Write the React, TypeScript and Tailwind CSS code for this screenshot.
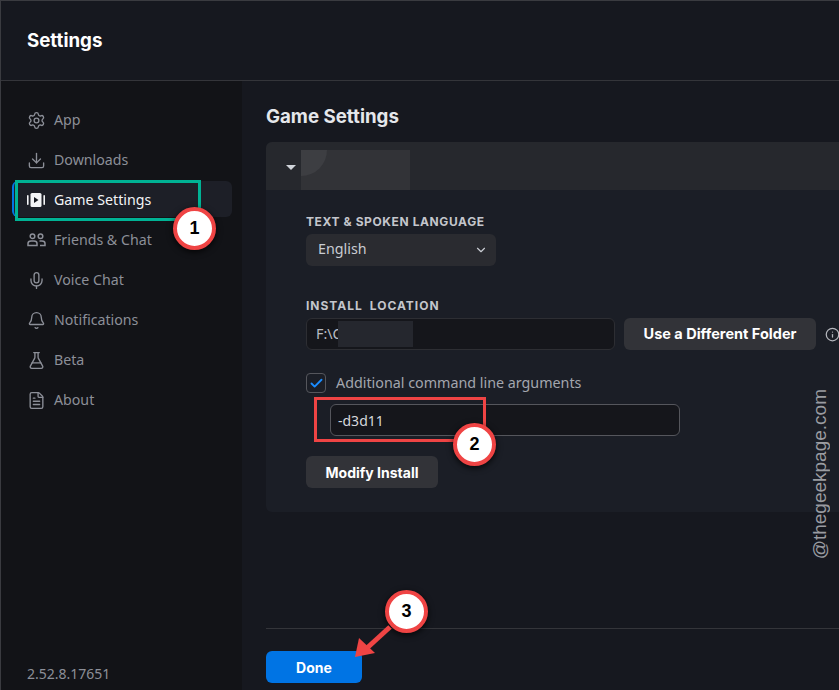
import { Settings, Download, Mic, Bell, FlaskConical, FileText, Check, ChevronDown, Info } from "lucide-react";

function GameIcon() {
  return (
    <svg width="18" height="16" viewBox="0 0 18 16" fill="none">
      <rect x="0" y="3" width="1.6" height="10" rx="0.8" fill="#f3f4f6" />
      <rect x="16.4" y="3" width="1.6" height="10" rx="0.8" fill="#f3f4f6" />
      <rect x="3.5" y="1" width="11" height="14" rx="1.5" fill="#f3f4f6" />
      <path d="M7 5l4.5 3L7 11z" fill="#16181f" />
    </svg>
  );
}

function FriendsIcon() {
  return (
    <svg width="19" height="14" viewBox="0 0 19 14" fill="none" stroke="currentColor" strokeWidth="1.5">
      <circle cx="5.5" cy="3.2" r="2.3" />
      <circle cx="13.5" cy="3.2" r="2.3" />
      <path d="M1 12.5v-2c0-1.4 1.3-2.5 3-2.5h3c1.7 0 3 1.100 3 2.500v2z" />
      <path d="M12.500 8h2.500c1.700 0 3 1.100 3 2.500v2h-5" />
    </svg>
  );
}

const NAV = [
  { label: "App", icon: <Settings size={19} strokeWidth={1.7} /> },
  { label: "Downloads", icon: <Download size={19} strokeWidth={1.7} /> },
  { label: "Game Settings", icon: <GameIcon />, active: true },
  { label: "Friends & Chat", icon: <FriendsIcon /> },
  { label: "Voice Chat", icon: <Mic size={19} strokeWidth={1.7} /> },
  { label: "Notifications", icon: <Bell size={19} strokeWidth={1.7} /> },
  { label: "Beta", icon: <FlaskConical size={19} strokeWidth={1.7} /> },
  { label: "About", icon: <FileText size={19} strokeWidth={1.7} /> },
];

function Badge({ n, className }: { n: number; className: string }) {
  return (
    <div
      className={`absolute w-[43px] h-[43px] rounded-full bg-white border-[4px] border-[#ef4444] flex items-center justify-center text-[18px] font-bold text-black shadow-[0_2px_6px_rgba(0,0,0,0.8)] font-['Liberation_Sans',sans-serif] ${className}`}
    >
      {n}
    </div>
  );
}

export default function App() {
  return (
    <div className="relative w-[839px] h-[690px] overflow-hidden flex flex-col bg-[#16181f] border-l border-t border-[#3a3b40] font-['Noto_Sans',sans-serif]">
      {/* Header */}
      <div className="h-[80px] shrink-0 border-b border-[#34353a] pl-[26px] pt-[25px]">
        <h1 className="text-[18.7px] leading-[30px] font-bold text-white font-['Inter',sans-serif]">Settings</h1>
      </div>

      <div className="flex-1 flex min-h-0">
        {/* Sidebar */}
        <div className="w-[241px] shrink-0 bg-[#121317] flex flex-col justify-between pb-[6px] pt-[20px]">
          <div className="flex flex-col gap-1">
            {NAV.map((item) => (
              <div
                key={item.label}
                className={`h-9 ml-[11px] w-[220px] flex items-center gap-[8px] pt-[2px] rounded-md text-[14.2px] ${
                  item.active ? "bg-[#1d1f27] text-[#f3f4f6] border-l-2 border-[#0074e4] pl-[12px]" : "text-[#8c8f98] pl-[14px]"
                }`}
              >
                <span className="w-[20px] flex justify-center shrink-0">{item.icon}</span>
                <span>{item.label}</span>
              </div>
            ))}
          </div>
          <div className="pl-[26px] text-[14px] leading-[20px] text-[#8c8f98]">2.52.8.17651</div>
        </div>

        {/* Main */}
        <div className="flex-1 min-w-0 pl-6 flex flex-col">
          <h2 className="mt-[23px] text-[18.7px] leading-[26px] font-bold text-[#e5e7eb] font-['Inter',sans-serif]">Game Settings</h2>

          <div className="mt-[12px] w-[620px] h-[370px] shrink-0 bg-[#1b1e26] rounded-md overflow-hidden">
            <div className="h-[48px] bg-[#26282d] flex items-end">
              <div className="h-full flex items-center pl-[20px] w-[35px]">
                <span className="mt-[2px] w-0 h-0 border-l-[5px] border-r-[5px] border-t-[5px] border-l-transparent border-r-transparent border-t-[#d1d5db]" />
              </div>
              <div className="w-[109px] h-[40px] bg-[#323337]">
                <div className="w-[26px] h-[26px] rounded-br-full bg-[#3d3e42]" />
              </div>
            </div>

            <div className="pl-[40px] pt-[24px]">
              <div className="text-[12px] leading-[16px] font-bold tracking-[0.6px] text-[#c4c6cc] font-['Inter',sans-serif]">TEXT &amp; SPOKEN LANGUAGE</div>
              <div className="mt-[4px] w-[190px] h-[32px] bg-[#2a2b30] rounded-md flex items-center justify-between pl-[12px] pr-[8px] pb-[3px] text-[14.3px] text-[#c9ccd3]">
                <span>English</span>
                <ChevronDown size={14} className="text-[#c9ccd3] mt-[3px]" />
              </div>

              <div className="mt-[32px] text-[12px] leading-[16px] font-bold tracking-[1px] [word-spacing:3px] text-[#c4c6cc] font-['Inter',sans-serif]">INSTALL LOCATION</div>
              <div className="mt-[4px] flex items-center">
                <div className="w-[309px] h-[32px] bg-[#15161b] border border-[#2d2e33] rounded-md flex items-center pl-[9px] text-[14.3px] text-[#b9bcc4]">
                  <span>F:\C</span>
                  <span className="-ml-[4px] w-[75px] h-[26px] bg-[#25272e]" />
                </div>
                <div className="ml-[9px] w-[192px] h-[32px] bg-[#323338] rounded-md flex items-center justify-center text-[14.5px] font-bold text-white font-['Inter',sans-serif]">Use a Different Folder</div>
                <Info size={15} className="ml-[9px] text-[#b4b6bc] shrink-0" />
              </div>

              <div className="mt-[23px] flex items-center gap-[10px]">
                <div className="w-[20px] h-[20px] border border-[#55565c] rounded-[4px] flex items-center justify-center">
                  <Check size={15} strokeWidth={3} className="text-[#1a8cff]" />
                </div>
                <span className="text-[14.3px] leading-[20px] text-[#a3a6ae]">Additional command line arguments</span>
              </div>

              <div className="mt-[11px] ml-[24px] w-[350px] h-[32px] bg-[#15161b] border border-[#55565c] rounded-md flex items-center pl-[7px] text-[14px] text-[#d6d8dd]">-d3d11</div>

              <div className="mt-[20px] w-[132px] h-[32px] bg-[#323338] rounded-md flex items-center justify-center text-[14px] font-bold text-white font-['Inter',sans-serif]">Modify Install</div>
            </div>
          </div>

          <div className="mt-auto border-t border-[#34353a] pt-[22px] pb-[7px]">
            <div className="w-[96px] h-[32px] bg-[#0074e4] rounded-md flex items-center justify-center text-[14px] font-bold text-white font-['Inter',sans-serif]">Done</div>
          </div>
        </div>
      </div>

      {/* Annotations */}
      <div className="absolute left-[14px] top-[179px] w-[186px] h-[41px] border-[3px] border-[#00b294]" />
      <Badge n={1} className="left-[172px] top-[206px]" />
      <div className="absolute left-[313px] top-[396px] w-[172px] h-[45px] border-[3px] border-[#ef4444]" />
      <Badge n={2} className="left-[452px] top-[422px]" />
      <Badge n={3} className="left-[384px] top-[589px]" />
      <svg className="absolute left-[350px] top-[620px]" width="50" height="45" viewBox="0 0 50 45" fill="none">
        <path d="M39 6L16 27" stroke="#ef4444" strokeWidth="5" />
        <path d="M4 36L8 17L24 32z" fill="#ef4444" />
      </svg>
      <div className="absolute left-[806px] top-[388px] [writing-mode:vertical-rl] rotate-180 text-[19px] leading-[26px] text-[#9a9ca1] font-['Liberation_Sans',sans-serif]">@thegeekpage.com</div>
    </div>
  );
}
